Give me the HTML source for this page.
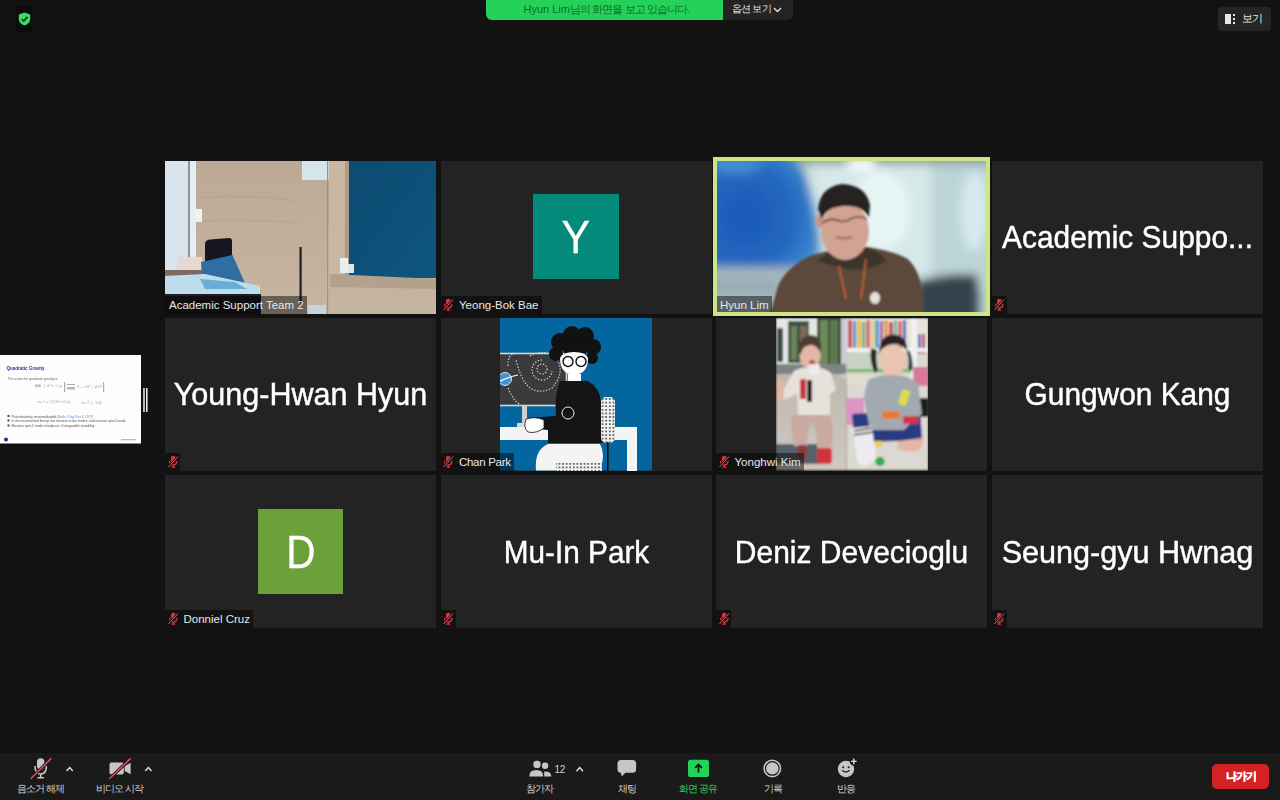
<!DOCTYPE html>
<html><head><meta charset="utf-8">
<style>
*{margin:0;padding:0;box-sizing:border-box}
html,body{width:1280px;height:800px;overflow:hidden;background:#121212;font-family:"Liberation Sans",sans-serif;position:relative}
.abs{position:absolute}
.tile{position:absolute;width:271px;height:152.5px;background:#232323;overflow:hidden}
.big{position:absolute;left:-20px;right:-20px;top:60.2px;text-align:center;color:#fff;font-size:32px;white-space:nowrap;line-height:32px;-webkit-text-stroke:0.45px #fff}
.lbl{position:absolute;left:0;bottom:0;height:18px;background:rgba(0,0,0,0.47);color:#e8e8e8;font-size:11.5px;line-height:18.5px;white-space:nowrap;padding:0 3.5px 0 4px}
.lbl.m{padding-left:18.5px}
.mic{position:absolute;left:0;bottom:0;width:15px;height:18px;background:rgba(0,0,0,0.47)}
.lbl svg,.mic svg{position:absolute;left:1.5px;top:2.5px}
#bar{position:absolute;left:0;top:753px;width:1280px;height:47px;background:#1a1a1a}
.tb{position:absolute;color:#d2d2d2;font-size:10px;white-space:nowrap;line-height:1;letter-spacing:-0.9px}
.av{position:absolute;color:#fff;font-size:46px;line-height:46px;text-align:center}
</style></head><body>

<svg width="0" height="0" style="position:absolute">
<defs>
<symbol id="mm" viewBox="0 0 12 13">
<rect x="4" y="0.8" width="4.6" height="7" rx="2.3" fill="#e0303c"/>
<path d="M2.6 5.8 C2.6 9 4.2 10 6.3 10 C8.4 10 10 9 10 5.8" stroke="#e0303c" stroke-width="1.3" fill="none"/>
<path d="M6.3 10 V12 M4.3 12.2 H8.3" stroke="#e0303c" stroke-width="1.2"/>
<path d="M1.5 12 L11 1.5" stroke="#1a0a0a" stroke-width="2.2"/>
<path d="M1.5 12 L11 1.5" stroke="#d06a78" stroke-width="1"/>
</symbol>
</defs>
</svg>

<!-- security shield -->
<div class="abs" style="left:16px;top:6px;width:16px;height:26px;background:#0c0c0c"></div>
<svg class="abs" style="left:17.5px;top:11.5px" width="13" height="14" viewBox="0 0 13 14">
<path d="M6.5 0.5 L12.2 2.6 V6.6 C12.2 10.2 9.8 12.6 6.5 13.6 C3.2 12.6 0.8 10.2 0.8 6.6 V2.6 Z" fill="#3bdc6c"/>
<path d="M3.6 7 L5.7 9 L9.6 4.8" stroke="#0b3a18" stroke-width="1.7" fill="none"/>
</svg>

<!-- top banner -->
<div class="abs" style="left:700px;top:-6px;width:93px;height:25.5px;background:#232323;border-radius:0 0 6px 0"></div>
<div class="abs" style="left:486px;top:-6px;width:237px;height:25.5px;background:#24d25a;border-radius:0 0 0 6px"></div>
<div class="tb" style="left:523.5px;top:4px;color:#0f6a2b;font-size:11px;letter-spacing:0">Hyun Lim<span style="letter-spacing:-0.9px;font-size:10.5px">님의 화면을 보고 있습니다.</span></div>
<div class="tb" style="left:732px;top:4px;color:#e0e0e0;font-size:10px;letter-spacing:-0.8px">옵션 보기</div>
<svg class="abs" style="left:772.5px;top:6.5px" width="9" height="6" viewBox="0 0 9 6"><path d="M1 1 L4.5 4.5 L8 1" stroke="#e0e0e0" stroke-width="1.4" fill="none"/></svg>

<!-- view button -->
<div class="abs" style="left:1217.5px;top:7px;width:53.5px;height:23.5px;background:#252525;border-radius:4px"></div>
<div class="abs" style="left:1225px;top:14px;width:6px;height:10px;background:#e8e8e8"></div>
<div class="abs" style="left:1232.5px;top:14px;width:2.5px;height:2px;background:#e8e8e8"></div>
<div class="abs" style="left:1232.5px;top:18px;width:2.5px;height:2px;background:#e8e8e8"></div>
<div class="abs" style="left:1232.5px;top:22px;width:2.5px;height:2px;background:#e8e8e8"></div>
<div class="tb" style="left:1241.5px;top:13px;color:#e8e8e8;font-size:11px;letter-spacing:-0.3px">보기</div>

<!-- share thumb -->
<svg class="abs" style="left:0;top:355px" width="150" height="89" viewBox="0 0 150 89">
<defs><filter id="bt"><feGaussianBlur stdDeviation="0.35"/></filter></defs>
<rect x="0" y="0" width="141" height="88.5" fill="#fdfdfd"/>
<g filter="url(#bt)">
<text x="6.5" y="14.8" font-family="Liberation Sans" font-weight="bold" font-size="6" fill="#34348a" textLength="38" lengthAdjust="spacingAndGlyphs">Quadratic Gravity</text>
<text x="7.5" y="25" font-family="Liberation Sans" font-size="3.6" fill="#666" textLength="50" lengthAdjust="spacingAndGlyphs">The action for quadratic gravity is</text>
<g opacity="0.6">
<rect x="35" y="29.5" width="6" height="2.5" fill="#999"/>
<text x="44" y="32" font-family="Liberation Sans" font-size="4" fill="#777" textLength="18" lengthAdjust="spacingAndGlyphs">∫ d⁴x √-g</text>
<rect x="64" y="27" width="1.2" height="10" fill="#777"/>
<rect x="67" y="29" width="8" height="1" fill="#777"/><rect x="67" y="32" width="8" height="2.5" fill="#888"/>
<text x="77" y="32.5" font-family="Liberation Sans" font-size="4" fill="#777" textLength="25" lengthAdjust="spacingAndGlyphs">R + αR² + βW²</text>
<rect x="103" y="27" width="1.2" height="10" fill="#777"/>
<text x="37.5" y="48" font-family="Liberation Sans" font-size="4" fill="#777" textLength="33" lengthAdjust="spacingAndGlyphs">m₀² = 1/(32πGα)</text>
<text x="81" y="48.5" font-family="Liberation Sans" font-size="4" fill="#777" textLength="21" lengthAdjust="spacingAndGlyphs">m₂² = 1/β</text>
</g>
<rect x="7.5" y="60" width="2" height="2" fill="#444"/>
<text x="11.5" y="62.5" font-family="Liberation Sans" font-size="3.2" fill="#555" textLength="45" lengthAdjust="spacingAndGlyphs">Perturbatively renormalizable</text>
<text x="57" y="62.5" font-family="Liberation Sans" font-size="3.2" fill="#6a90d0" textLength="36" lengthAdjust="spacingAndGlyphs">[Stelle, Phys.Rev.D 1977]</text>
<rect x="7.5" y="64.5" width="2" height="2" fill="#444"/>
<text x="11.5" y="67" font-family="Liberation Sans" font-size="3.2" fill="#555" textLength="114" lengthAdjust="spacingAndGlyphs">In the renormalized theory, two massive scalar modes, and massive spin-2 mode</text>
<rect x="7.5" y="69.5" width="2" height="2" fill="#444"/>
<text x="11.5" y="72" font-family="Liberation Sans" font-size="3.2" fill="#555" textLength="83" lengthAdjust="spacingAndGlyphs">Massive spin-2 mode introduces Ostrogradski instability</text>
<circle cx="6" cy="84.5" r="2" fill="#2a2a8a"/>
<rect x="121" y="84" width="15" height="1.3" fill="#bbb"/>
</g>
<rect x="143.2" y="33" width="1.6" height="24" fill="#e4e4e4"/>
<rect x="146" y="33" width="1.6" height="24" fill="#e4e4e4"/>
</svg>

<!-- ROW 1 -->
<div class="tile" style="left:165px;top:161px" id="t1">
<svg class="abs" style="left:0;top:0" width="271" height="152.5" viewBox="0 0 271 152.5">
<defs><filter id="b1" x="-5%" y="-5%" width="110%" height="110%"><feGaussianBlur stdDeviation="0.7"/></filter>
<linearGradient id="wood" x1="0" y1="0" x2="0" y2="1"><stop offset="0" stop-color="#bca995"/><stop offset="1" stop-color="#c6b5a1"/></linearGradient>
<linearGradient id="brd" x1="0" y1="0" x2="1" y2="1"><stop offset="0" stop-color="#0f4c70"/><stop offset="1" stop-color="#11557e"/></linearGradient>
</defs>
<g filter="url(#b1)">
<rect x="-2" y="-2" width="275" height="157" fill="url(#wood)"/>
<path d="M31 37 Q90 33 135 40 M31 60 Q90 58 135 62" stroke="#b09c88" stroke-width="1" fill="none" opacity="0.6"/>
<rect x="-2" y="-2" width="25" height="115" fill="#d9e5ee"/>
<rect x="23" y="-2" width="2" height="115" fill="#8c939b"/>
<rect x="25" y="-2" width="6" height="112" fill="#e5eef4"/>
<rect x="30" y="48" width="7" height="13" fill="#eef3f6"/>
<rect x="137" y="-2" width="29" height="21" fill="#d5e5ee"/>
<rect x="162" y="-2" width="1.2" height="156" fill="#a89078"/>
<rect x="164" y="-2" width="21" height="128" fill="#c9b7a2"/>
<rect x="180" y="-2" width="4" height="120" fill="#b09a84"/>
<rect x="184" y="-2" width="89" height="119" fill="url(#brd)"/>
<path d="M165 113 L273 118 L273 128 L165 126 Z" fill="#b3a18e"/>
<rect x="175" y="97" width="8" height="15" fill="#e9eef2"/>
<rect x="183" y="103" width="6" height="9" fill="#dfe6ea"/>
<rect x="-2" y="109" width="42" height="8" fill="#7c6a5e"/>
<rect x="12" y="96" width="25" height="13" fill="#e6d9d2"/>
<path d="M40 83 Q40 79 45 78.5 L64 77 Q67 77 67 80 L67 101 L40 103 Z" fill="#141822"/>
<path d="M36 101 L67.5 94 L81 124.5 L37 118 Z" fill="#2e6ea2"/>
<path d="M-2 115 L40 113 L95 125 L95 134 L-2 134 Z" fill="#bddcec"/>
<path d="M35 118 L70 121 L82 128 L40 128 Z" fill="#6aaed4"/>
<rect x="-2" y="133" width="98" height="22" fill="#1c1d22"/>
<rect x="134.5" y="86" width="2.2" height="56" fill="#1e1e22"/>
<rect x="143" y="144" width="18" height="10" fill="#c8d2da"/>
</g>
</svg>
  <div class="lbl">Academic Support Team 2</div>
</div>
<div class="tile" style="left:440.5px;top:161px" id="t2">
  <div class="abs" style="left:92.6px;top:32.75px;width:85.6px;height:85.6px;background:#038a7b"></div>
  <div class="av" style="left:92.6px;top:53px;width:85.6px;font-size:46.5px;transform:scaleX(0.92);-webkit-text-stroke:0.3px #fff">Y</div>
  <div class="lbl m"><svg width="12" height="13"><use href="#mm"/></svg>Yeong-Bok Bae</div>
</div>
<div class="tile" style="left:716px;top:161px" id="t3">
<svg class="abs" style="left:0;top:0" width="271" height="152.5" viewBox="0 0 271 152.5">
<defs>
<filter id="b3" x="-20%" y="-20%" width="140%" height="140%"><feGaussianBlur stdDeviation="5"/></filter>
<filter id="b3s" x="-20%" y="-20%" width="140%" height="140%"><feGaussianBlur stdDeviation="1.2"/></filter>
<radialGradient id="blu" cx="0.35" cy="0.55" r="0.75"><stop offset="0" stop-color="#1a58b8"/><stop offset="0.55" stop-color="#2468c0"/><stop offset="0.85" stop-color="#3a88cc"/><stop offset="1" stop-color="#70a8d0"/></radialGradient>
</defs>
<rect width="271" height="152.5" fill="#b9d0d0"/>
<g filter="url(#b3)">
<rect x="-10" y="-10" width="290" height="14" fill="#8fa2a6"/>
<rect x="95" y="4" width="120" height="110" fill="#d6e8e8"/>
<ellipse cx="165" cy="50" rx="30" ry="40" fill="#e6f4f4"/>
<rect x="215" y="4" width="70" height="120" fill="#bcd4d6"/>
<ellipse cx="258" cy="50" rx="14" ry="40" fill="#d4eaee"/>
<ellipse cx="145" cy="3" rx="15" ry="7" fill="#f6fafa"/>
<path d="M-10 -10 L70 -10 Q92 10 100 50 Q108 90 104 108 L-10 110 Z" fill="url(#blu)"/>
<ellipse cx="20" cy="4" rx="26" ry="10" fill="#4a92d4" opacity="0.8"/>
<rect x="-10" y="106" width="90" height="60" fill="#a4b6bc"/>
<rect x="-10" y="122" width="70" height="6" fill="#8898a0" opacity="0.7"/>
<path d="M200 122 Q230 110 262 114 L262 160 L200 160 Z" fill="#36424e"/>
</g>
<g filter="url(#b3s)">
<path d="M54 154 L62 125 Q70 106 96 94 L120 88 L150 86 Q178 90 192 98 Q204 110 206 130 L208 154 Z" fill="#5b4a3b"/>
<path d="M100 100 Q112 92 120 88 L150 86 Q165 90 170 100 Q150 112 130 108 Z" fill="#3e342c"/>
<ellipse cx="104" cy="60" rx="4" ry="7" fill="#c49480"/>
<ellipse cx="129" cy="70" rx="24" ry="29" fill="#d2a292"/>
<path d="M102 48 Q104 26 126 23 Q150 24 154 44 L153 56 Q146 44 128 45 Q110 46 106 58 Z" fill="#262322"/>
<path d="M106 62 Q116 55 126 61 M131 60 Q141 53 151 58 M126 61 Q128.5 59 131 60" stroke="#3e3432" stroke-width="1.3" fill="none"/>
<path d="M120 76 Q128 79 136 76" stroke="#8a5a50" stroke-width="1.5" fill="none"/>
<path d="M123 105 L130 138 M150 98 L145 138" stroke="#c0602c" stroke-width="1.8" fill="none"/>
<ellipse cx="159" cy="137" rx="5" ry="6" fill="#e8e4dc"/>
</g>
</svg>
  <div class="lbl">Hyun Lim</div>
</div>
<div class="tile" style="left:991.5px;top:161px" id="t4">
  <div class="big" style="transform:scaleX(0.934)">Academic Suppo...</div>
  <div class="mic"><svg width="12" height="13"><use href="#mm"/></svg></div>
</div>

<!-- ROW 2 -->
<div class="tile" style="left:165px;top:318px" id="t5">
  <div class="big" style="transform:scaleX(0.954)">Young-Hwan Hyun</div>
  <div class="mic"><svg width="12" height="13"><use href="#mm"/></svg></div>
</div>
<div class="tile" style="left:440.5px;top:318px" id="t6">
<svg class="abs" style="left:59.5px;top:0" width="152" height="152.5" viewBox="0 0 152 152.5">
<defs><pattern id="dots" width="3.6" height="3.6" patternUnits="userSpaceOnUse"><rect width="3.6" height="3.6" fill="#f2f2f2"/><circle cx="1.8" cy="1.8" r="1" fill="#444"/></pattern></defs>
<rect width="152" height="152.5" fill="#04669f"/>
<rect x="-2" y="35.5" width="68.5" height="52" fill="#3b3b3d" stroke="#d6d6d6" stroke-width="1.6"/>
<rect x="22" y="88" width="5" height="18" fill="#cfcfcf"/>
<rect x="17" y="105" width="27" height="4" fill="#d8d8d8"/>
<circle cx="5" cy="61" r="6.5" fill="#3f93d3" stroke="#fff" stroke-width="0.8"/>
<path d="M-3 65 Q5 60 18 57" stroke="#fff" stroke-width="1.2" fill="none"/>
<g stroke="#ddd" stroke-width="1.1" stroke-dasharray="1.4 1.6" fill="none">
<circle cx="42" cy="51" r="5"/>
<path d="M42 42 A10 10 0 1 0 52 53"/>
<path d="M30 38 Q44 30 56 40 Q66 54 52 70 Q36 78 26 66 Q20 58 16 42"/>
<path d="M8 48 Q8 36 14 36 M8 70 Q14 84 20 86"/>
</g>
<rect x="-2" y="109" width="139" height="13" fill="#f4f4f4"/>
<rect x="127" y="122" width="10" height="32" fill="#f4f4f4"/>
<g fill="#111"><circle cx="60" cy="24" r="9"/><circle cx="72" cy="17" r="9"/><circle cx="85" cy="18" r="9"/><circle cx="93" cy="29" r="8"/><circle cx="56" cy="36" r="7"/><circle cx="92" cy="40" r="6"/><circle cx="75" cy="30" r="12"/></g>
<path d="M60 40 Q60 56 74 57 Q88 56 88 40 Q86 34 74 34 Q62 34 60 40 Z" fill="#fff"/>
<circle cx="68" cy="43.5" r="5" fill="none" stroke="#111" stroke-width="1.4"/>
<circle cx="81" cy="43.5" r="5" fill="none" stroke="#111" stroke-width="1.4"/>
<rect x="68" y="56" width="13" height="7" fill="#fff"/>
<path d="M60 63 L88 63 Q100 70 101 84 L103 125 L48 125 L48 112 L28 110 Q25 104 28 100 L56 98 Q54 78 60 63 Z" fill="#141414"/>
<path d="M26 101 Q36 98 44 102 L44 110 Q36 116 28 114 Q23 110 26 101 Z" fill="#fff" stroke="#111" stroke-width="0.8"/>
<circle cx="68" cy="95" r="6" fill="none" stroke="#eee" stroke-width="1"/>
<rect x="101" y="79" width="14" height="46" rx="5" fill="url(#dots)"/>
<rect x="107" y="124" width="1.6" height="30" fill="#111"/>
<path d="M36 152.5 Q34 132 48 126 L100 126 Q106 136 100 152.5 Z" fill="#f4f4f4"/>
<rect x="56" y="145" width="46" height="8" fill="url(#dots)"/>
</svg>
  <div class="lbl m" style="letter-spacing:-0.3px"><svg width="12" height="13"><use href="#mm"/></svg>Chan Park</div>
</div>
<div class="tile" style="left:716px;top:318px" id="t7">
<svg class="abs" style="left:59.5px;top:0" width="152.5" height="152.5" viewBox="0 0 152.5 152.5">
<defs><filter id="b7" x="-5%" y="-5%" width="110%" height="110%"><feGaussianBlur stdDeviation="0.9"/></filter>
<linearGradient id="gnd" x1="0" y1="0" x2="0" y2="1"><stop offset="0" stop-color="#8e9492"/><stop offset="0.35" stop-color="#bdb7ae"/><stop offset="1" stop-color="#cfc9c2"/></linearGradient>
<clipPath id="cl7"><rect width="70.5" height="152.5"/></clipPath>
<clipPath id="cr7"><rect x="70.5" width="82" height="152.5"/></clipPath>
</defs>
<g filter="url(#b7)">
<g clip-path="url(#cl7)">
<rect width="71" height="152.5" fill="url(#gnd)"/>
<rect x="0" y="0" width="71" height="46" fill="#e4e7e6"/>
<rect x="1" y="10" width="6" height="34" fill="#3c4a3e"/>
<rect x="12" y="3" width="21" height="42" fill="#3f5040"/>
<rect x="15" y="8" width="6" height="34" fill="#6a8458"/>
<rect x="24" y="8" width="7" height="34" fill="#7a6a58"/>
<rect x="41" y="0" width="24" height="50" fill="#3a4a3a"/>
<rect x="44" y="2" width="8" height="44" fill="#6c8a5a"/>
<rect x="54" y="2" width="8" height="44" fill="#5c7a4c"/>
<rect x="65" y="0" width="6" height="60" fill="#cfc8d8"/>
<rect x="0" y="46" width="71" height="10" fill="#7c8486"/>
<rect x="0" y="126" width="44" height="20" fill="#56606a"/>
<path d="M16 97 Q14 110 18 128 L31 130 Q30 114 36 104 Q42 114 41 130 L56 132 Q58 112 55 97 Z" fill="#c9aaa0"/>
<path d="M18 53 Q26 48 36 50 Q48 49 55 55 L60 72 L54 76 L54 97 L22 97 L21 76 L8 82 L5 76 Z" fill="#e7e1dc"/>
<rect x="24" y="61" width="6" height="20" fill="#c8323a"/>
<rect x="31" y="62" width="5" height="22" fill="#222"/>
<ellipse cx="34" cy="38" rx="10.5" ry="12.5" fill="#e2b7a6"/>
<path d="M23 34 Q22 18 35 17 Q46 18 45 30 L44 34 Q40 26 34 27 Q26 28 25 36 Z" fill="#4c3c32"/>
<path d="M32 47 L44 46 L43 56 L33 56 Z" fill="#eceeee"/>
<ellipse cx="36" cy="44" rx="3" ry="2" fill="#b04848"/>
<rect x="21" y="127" width="10" height="14" rx="3" fill="#8a3a40"/>
<rect x="41" y="130" width="15" height="16" rx="4" fill="#d2303e"/>
<rect x="0" y="62" width="8" height="20" fill="#e0b8a8"/>
</g>
<g clip-path="url(#cr7)">
<rect x="70" width="83" height="152.5" fill="#dcd8d2"/>
<rect x="70" y="0" width="83" height="31" fill="#e6e2dc"/>
<rect x="72" y="2" width="4" height="28" fill="#c84a5a"/><rect x="77" y="3" width="3" height="27" fill="#4a90c8"/>
<rect x="81" y="2" width="4" height="28" fill="#e8c040"/><rect x="86" y="4" width="3" height="26" fill="#68b068"/>
<rect x="90" y="2" width="4" height="28" fill="#d86a7a"/><rect x="95" y="3" width="3" height="27" fill="#e0d060"/>
<rect x="99" y="2" width="4" height="28" fill="#5aa0d0"/><rect x="104" y="3" width="3" height="27" fill="#a060a8"/>
<rect x="108" y="2" width="4" height="28" fill="#e0a040"/><rect x="113" y="4" width="4" height="26" fill="#c84a5a"/>
<rect x="118" y="2" width="3" height="28" fill="#70b8a0"/><rect x="122" y="3" width="4" height="27" fill="#d86a7a"/>
<rect x="127" y="2" width="3" height="28" fill="#4a70b8"/><rect x="135" y="0" width="6" height="70" fill="#f0f0f0"/>
<rect x="142" y="16" width="3" height="20" fill="#5a70c0"/><rect x="146" y="16" width="3" height="20" fill="#c0506a"/>
<rect x="70" y="30" width="83" height="4" fill="#f2f2f2"/>
<rect x="70" y="34" width="65" height="22" fill="#c9d3c4"/>
<rect x="70" y="51" width="65" height="3" fill="#78b868"/>
<rect x="70" y="56" width="65" height="10" fill="#e0dcd0"/>
<rect x="137" y="49" width="16" height="19" fill="#d87a98"/>
<rect x="70" y="80" width="18" height="27" fill="#dc96c4"/>
<rect x="144" y="80" width="9" height="19" fill="#1e1e1e"/>
<path d="M121 112 Q140 108 147 120 Q148 133 136 134 L122 132 Z" fill="#e3b7a4"/>
<path d="M76 96 L144 92 L146 120 Q110 126 78 122 Z" fill="#2b3b82"/>
<path d="M92 62 Q104 56 117 57 Q134 57 142 66 L146 96 L134 106 L128 112 L94 112 L90 92 L88 78 Z" fill="#a3a9b0"/>
<rect x="124" y="72" width="8" height="15" fill="#dede42" transform="rotate(20 128 80)"/>
<rect x="106" y="93" width="18" height="8" rx="3" fill="#e87a38"/>
<rect x="127" y="98" width="15" height="8" fill="#d03446"/>
<path d="M76 110 L96 108 L100 140 L92 148 L82 146 Z" fill="#ececf0"/>
<path d="M78 113 L96 110 M78 117 L97 114" stroke="#1c1c1c" stroke-width="1.6"/>
<ellipse cx="117" cy="42" rx="13.5" ry="15.5" fill="#e9c4b0"/>
<path d="M103 36 Q103 17 117 16.5 Q132 17 131 34 Q127 25 117 26 Q107 27 103 36 Z" fill="#2a2420"/>
<path d="M95 30 Q93 44 99 55 L102 52 Q99 42 101 32 Z" fill="#2a2420"/>
<path d="M133 32 Q138 42 136 53 L132 51 Q134 42 131 34 Z" fill="#2a2420"/>
<circle cx="104" cy="143.5" r="4.7" fill="#2eb050"/>
<rect x="99" y="123" width="7" height="6" fill="#e8d040"/>
</g>
</g>
</svg>
  <div class="lbl m"><svg width="12" height="13"><use href="#mm"/></svg>Yonghwi Kim</div>
</div>
<div class="tile" style="left:991.5px;top:318px" id="t8">
  <div class="big" style="transform:scaleX(0.933)">Gungwon Kang</div>
</div>

<!-- ROW 3 -->
<div class="tile" style="left:165px;top:475.3px" id="t9">
  <div class="abs" style="left:93.1px;top:33.5px;width:85px;height:85.3px;background:#6ba13a"></div>
  <div class="av" style="left:93px;top:54px;width:85.6px;font-size:46.5px;transform:scaleX(0.87);-webkit-text-stroke:0.3px #fff">D</div>
  <div class="lbl m"><svg width="12" height="13"><use href="#mm"/></svg>Donniel Cruz</div>
</div>
<div class="tile" style="left:440.5px;top:475.3px" id="t10">
  <div class="big" style="transform:scaleX(0.929);top:61px">Mu-In Park</div>
  <div class="mic"><svg width="12" height="13"><use href="#mm"/></svg></div>
</div>
<div class="tile" style="left:716px;top:475.3px" id="t11">
  <div class="big" style="transform:scaleX(0.937);top:61px">Deniz Devecioglu</div>
  <div class="mic"><svg width="12" height="13"><use href="#mm"/></svg></div>
</div>
<div class="tile" style="left:991.5px;top:475.3px" id="t12">
  <div class="big" style="transform:scaleX(0.956);top:61px">Seung-gyu Hwnag</div>
  <div class="mic"><svg width="12" height="13"><use href="#mm"/></svg></div>
</div>

<!-- speaker border -->
<div class="abs" style="left:712.7px;top:157.2px;width:277.3px;height:159.3px;border:4px solid #cfe585"></div>

<!-- bottom bar -->
<div id="bar"></div>
<svg class="abs" style="left:0;top:753px" width="900" height="47" viewBox="0 753 900 47">
<g fill="#c6c6c6" stroke="none">
<rect x="37" y="758.3" width="7.4" height="11.4" rx="3.7"/>
</g>
<path d="M35 766 Q35 774 40.7 774 Q46.4 774 46.4 766" stroke="#c6c6c6" stroke-width="1.6" fill="none"/>
<path d="M40.7 774 V777.6 M37.4 777.8 H44" stroke="#c6c6c6" stroke-width="1.5" fill="none"/>
<path d="M30.8 778.8 L51.2 758.4" stroke="#2a1010" stroke-width="3.2"/>
<path d="M30.8 778.8 L51.2 758.4" stroke="#dd5560" stroke-width="1.5"/>
<path d="M66.6 771 L69.7 767.6 L72.8 771" stroke="#dedede" stroke-width="1.5" fill="none"/>
<rect x="109.5" y="762.6" width="14.3" height="11.9" rx="2" fill="#c6c6c6"/>
<path d="M124.6 766.2 L130.6 762.8 L130.6 774.3 L124.6 770.9 Z" fill="#c6c6c6"/>
<path d="M109.4 778.8 L130.6 758.4" stroke="#2a1010" stroke-width="3.2"/>
<path d="M109.4 778.8 L130.6 758.4" stroke="#dd5560" stroke-width="1.5"/>
<path d="M145.3 771 L148.4 767.6 L151.5 771" stroke="#dedede" stroke-width="1.5" fill="none"/>
<circle cx="537" cy="764.4" r="3.7" fill="#c6c6c6"/>
<path d="M529.4 776.4 Q529.2 770 536.3 770 Q543.2 770 543.2 776.4 Z" fill="#c6c6c6"/>
<circle cx="545.1" cy="765.8" r="3.2" fill="#c6c6c6"/>
<path d="M544.2 776.4 L544.2 771.6 Q551.3 771.2 551.3 776.4 Z" fill="#c6c6c6"/>
<path d="M576.5 771.2 L579.7 767.6 L582.9 771.2" stroke="#dedede" stroke-width="1.5" fill="none"/>
<rect x="617.5" y="760" width="18.6" height="12.7" rx="3.5" fill="#c6c6c6"/>
<path d="M620.5 772 L626 772 L621.8 776.6 Z" fill="#c6c6c6"/>
<rect x="688" y="759.8" width="21" height="17.2" rx="2.6" fill="#22d35a"/>
<path d="M698.5 772.6 V764.6 M695.2 767.8 L698.5 764.4 L701.8 767.8" stroke="#0c0c0c" stroke-width="1.7" fill="none"/>
<circle cx="772.3" cy="768.4" r="8.2" stroke="#c6c6c6" stroke-width="1.6" fill="none"/>
<circle cx="772.3" cy="768.4" r="6.2" fill="#c6c6c6"/>
<circle cx="846" cy="769" r="8.2" fill="#c6c6c6"/>
<circle cx="853.8" cy="761.4" r="4" fill="#1a1a1a"/>
<path d="M853.8 758.6 V764.2 M851 761.4 H856.6" stroke="#e0e0e0" stroke-width="1.4"/>
<circle cx="843.2" cy="767.2" r="1.05" fill="#1a1a1a"/>
<circle cx="848.6" cy="767.2" r="1.05" fill="#1a1a1a"/>
<path d="M842.3 770.2 Q845.9 773.6 849.5 770.2" stroke="#1a1a1a" stroke-width="1.2" fill="none"/>
</svg>
<div class="tb" style="left:554.5px;top:765px;font-size:10px;letter-spacing:-0.3px">12</div>
<div class="tb" style="left:17px;top:783.7px">음소거 해제</div>
<div class="tb" style="left:95.5px;top:783.7px">비디오 시작</div>
<div class="tb" style="left:526px;top:783.7px">참가자</div>
<div class="tb" style="left:617.5px;top:783.7px">채팅</div>
<div class="tb" style="left:678.5px;top:783.7px;color:#2fd35e">화면 공유</div>
<div class="tb" style="left:763.5px;top:783.7px">기록</div>
<div class="tb" style="left:836.5px;top:783.7px">반응</div>
<div class="abs" style="left:1212px;top:763.5px;width:57px;height:25px;background:#d42121;border-radius:5px"></div>
<div class="tb" style="left:1226px;top:770.5px;color:#fff;font-weight:bold;font-size:11px;letter-spacing:-1.1px;-webkit-text-stroke:0.45px #fff">나가기</div>

</body></html>
